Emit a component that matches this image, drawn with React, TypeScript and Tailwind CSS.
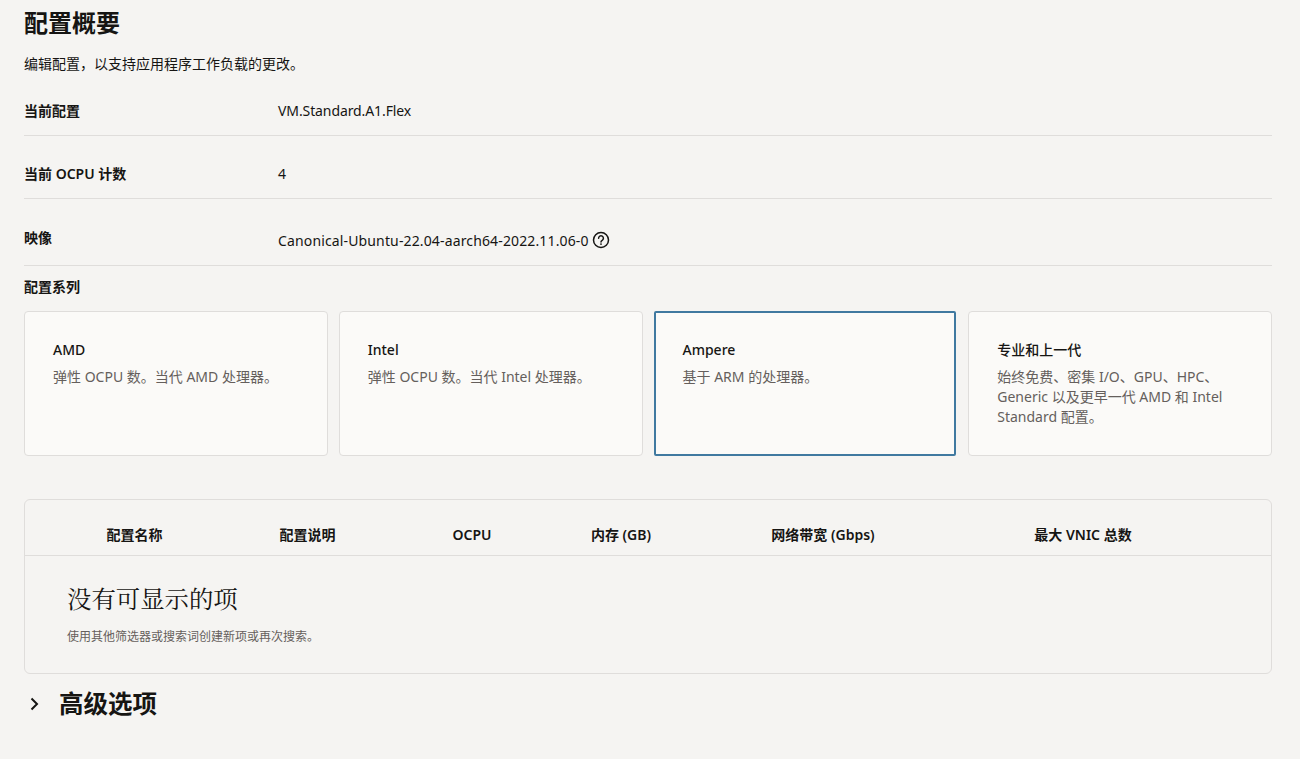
const fontStack = "font-['Noto_Sans','Noto_Sans_CJK_SC',sans-serif]";

const families = [
  { name: "AMD", text: "弹性 OCPU 数。当代 AMD 处理器。" },
  { name: "Intel", text: "弹性 OCPU 数。当代 Intel 处理器。" },
  { name: "Ampere", text: "基于 ARM 的处理器。", selected: true },
  { name: "专业和上一代", text: "始终免费、密集 I/O、GPU、HPC、Generic 以及更早一代 AMD 和 Intel Standard 配置。" },
];

const columns = [
  { label: "配置名称", width: "w-[175px]" },
  { label: "配置说明", width: "w-[171px]" },
  { label: "OCPU", width: "w-[158px]" },
  { label: "内存 (GB)", width: "w-[140px]" },
  { label: "网络带宽 (Gbps)", width: "w-[264px]" },
  { label: "最大 VNIC 总数", width: "w-[256px]" },
];

function HelpIcon() {
  return (
    <svg viewBox="0 0 18 18" className="ml-[3px] h-[18px] w-[18px] -translate-y-[1px]" fill="none" stroke="#161513" strokeWidth="1.5" aria-hidden>
      <circle cx="9" cy="9" r="7.5" />
      <path d="M6.6 7.2a2.4 2.4 0 1 1 3.6 2.1c-.8.45-1.2.9-1.2 1.7" strokeLinecap="round" />
      <circle cx="9" cy="13.1" r="0.9" fill="#161513" stroke="none" />
    </svg>
  );
}

function SummaryRow({ label, children, className }: { label: string; children: React.ReactNode; className: string }) {
  return (
    <div className={`flex items-start border-b border-[#dfdddb] text-sm leading-5 ${className}`}>
      <div className="w-[254px] shrink-0 font-semibold">{label}</div>
      <div className="flex items-center">{children}</div>
    </div>
  );
}

export default function App() {
  return (
    <div className={`h-[759px] overflow-hidden bg-[#f5f4f2] pr-[28px] pl-6 text-[#161513] ${fontStack}`}>
      <h1 className="pt-[6px] text-2xl leading-[34px] font-bold">配置概要</h1>
      <p className="mt-[14px] text-sm leading-5">编辑配置，以支持应用程序工作负载的更改。</p>

      <SummaryRow label="当前配置" className="mt-[27px] h-[35px]">
        <span className="tracking-[-0.1px]">VM.Standard.A1.Flex</span>
      </SummaryRow>
      <SummaryRow label="当前 OCPU 计数" className="h-[63px] pt-[28px]">
        4
      </SummaryRow>
      <SummaryRow label="映像" className="h-[67px] pt-[29px]">
        <span className="mt-[3px] flex items-center">
          <span className="tracking-[0.14px]">Canonical-Ubuntu-22.04-aarch64-2022.11.06-0</span>
          <HelpIcon />
        </span>
      </SummaryRow>

      <div className="mt-[11px] text-sm leading-5 font-semibold">配置系列</div>

      <div className="mt-[14px] grid grid-cols-4 gap-[11px]">
        {families.map((f) => (
          <div
            key={f.name}
            className={`h-[145px] bg-[#fbfaf8] ${
              f.selected
                ? "mr-px rounded-[2px] border-2 border-[#4079a0] px-[27px] pt-[27px]"
                : "rounded-[4px] border border-[#dfdddb] px-[28px] pt-[28px]"
            }`}
          >
            <div className="text-sm leading-5 font-medium">{f.name}</div>
            <div className="mt-[7px] text-sm leading-5 text-[#655f5c]">{f.text}</div>
          </div>
        ))}
      </div>

      <div className="mt-[43px] h-[175px] rounded-[6px] border border-[#dfdddb]">
        <div className="flex h-[56px] items-center border-b border-[#dfdddb] pt-[15px] pl-[22px] text-sm font-semibold">
          {columns.map((c) => (
            <div key={c.label} className={`${c.width} text-center`}>
              {c.label}
            </div>
          ))}
        </div>
        <div className="pt-[26px] pl-[42px]">
          <div className="font-['Liberation_Serif','Noto_Serif_CJK_SC',serif] text-[24.4px] leading-9">没有可显示的项</div>
          <div className="mt-[11px] text-xs leading-4 text-[#655f5c]">使用其他筛选器或搜索词创建新项或再次搜索。</div>
        </div>
      </div>

      <div className="mt-[10px] flex items-center">
        <svg viewBox="0 0 14 14" className="ml-[3px] h-[14px] w-[14px]" fill="none" stroke="#161513" strokeWidth="2" aria-hidden>
          <path d="M4.5 1.5 10 7l-5.5 5.5" />
        </svg>
        <h2 className="ml-[18px] text-[24.5px] leading-[40px] font-bold">高级选项</h2>
      </div>
    </div>
  );
}
